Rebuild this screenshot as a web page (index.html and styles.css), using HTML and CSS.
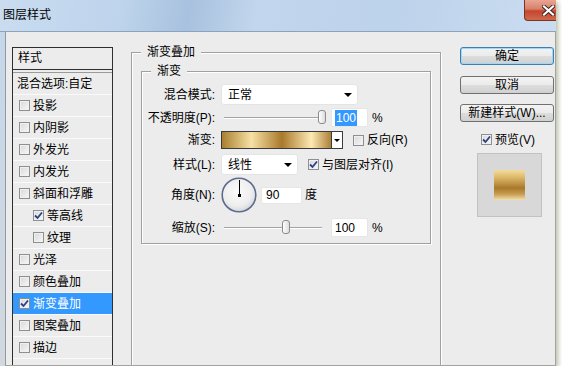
FILE: index.html
```html
<!DOCTYPE html>
<html lang="zh-CN">
<head>
    <meta charset="UTF-8">
    <meta name="viewport" content="width=device-width, initial-scale=1.0">
    <title>图层样式</title>
    <link rel="stylesheet" href="styles.css">
</head>
<body>
    <div class="window">
        <div class="titlebar">
            <span class="title">图层样式</span>
            <span class="close">
                <svg width="13" height="11" viewBox="0 0 13 11">
                    <path d="M2 1.5 L11 9.5 M11 1.5 L2 9.5" stroke="#3a2520" stroke-width="4" stroke-linecap="square"/>
                    <path d="M2 1.5 L11 9.5 M11 1.5 L2 9.5" stroke="#fff" stroke-width="2.2" stroke-linecap="square"/>
                </svg>
            </span>
        </div>
        <div class="frame">
            <div class="client">
                <!-- left: style list -->
                <div class="style-list">
                    <div class="list-head">样式</div>
                    <div class="list-item blend">混合选项:自定</div>
                    <div class="list-item"><span class="cb"></span>投影</div>
                    <div class="list-item"><span class="cb"></span>内阴影</div>
                    <div class="list-item"><span class="cb"></span>外发光</div>
                    <div class="list-item"><span class="cb"></span>内发光</div>
                    <div class="list-item"><span class="cb"></span>斜面和浮雕</div>
                    <div class="list-item sub"><span class="cb"><svg width="9" height="9" viewBox="0 0 9 9"><path d="M1 4.5 L3.5 7 L8 1.5" fill="none" stroke="#2c3f86" stroke-width="1.8"/></svg></span>等高线</div>
                    <div class="list-item sub"><span class="cb"></span>纹理</div>
                    <div class="list-item"><span class="cb"></span>光泽</div>
                    <div class="list-item"><span class="cb"></span>颜色叠加</div>
                    <div class="list-item selected"><span class="cb"><svg width="9" height="9" viewBox="0 0 9 9"><path d="M1 4.5 L3.5 7 L8 1.5" fill="none" stroke="#2c3f86" stroke-width="1.8"/></svg></span>渐变叠加</div>
                    <div class="list-item"><span class="cb"></span>图案叠加</div>
                    <div class="list-item"><span class="cb"></span>描边</div>
                    <div class="list-item"></div>
                </div>

                <!-- middle: settings -->
                <fieldset class="panel">
                    <legend>渐变叠加</legend>
                    <fieldset class="group">
                        <legend>渐变</legend>

                        <div class="row r-mode">
                            <span class="label">混合模式:</span>
                            <span class="select mode">正常<i class="arrow"></i></span>
                        </div>

                        <div class="row r-opacity">
                            <span class="label">不透明度(P):</span>
                            <span class="slider"><i class="thumb" style="left: 97px"></i></span>
                            <span class="num"><span class="sel-text">100</span></span>
                            <span class="unit">%</span>
                        </div>

                        <div class="row r-gradient">
                            <span class="label">渐变:</span>
                            <span class="gradient-pick"><span class="swatch"></span><span class="drop"><i class="arrow small"></i></span></span>
                            <span class="check reverse"><span class="cb"></span>反向(R)</span>
                        </div>

                        <div class="row r-style">
                            <span class="label">样式(L):</span>
                            <span class="select kind">线性<i class="arrow"></i></span>
                            <span class="check align"><span class="cb"><svg width="9" height="9" viewBox="0 0 9 9"><path d="M1 4.5 L3.5 7 L8 1.5" fill="none" stroke="#2c3f86" stroke-width="1.8"/></svg></span>与图层对齐(I)</span>
                        </div>

                        <div class="row r-angle">
                            <span class="label">角度(N):</span>
                            <svg class="dial" width="36" height="36" viewBox="0 0 36 36">
                                <defs>
                                    <radialGradient id="dialFill" cx="0.45" cy="0.4" r="0.6">
                                        <stop offset="0" stop-color="#fbfbfb"/>
                                        <stop offset="0.7" stop-color="#eeeeee"/>
                                        <stop offset="1" stop-color="#d6d8dc"/>
                                    </radialGradient>
                                </defs>
                                <circle cx="18" cy="18" r="16.8" fill="url(#dialFill)" stroke="#5f6b8c" stroke-width="1.6"/>
                                <line x1="18.5" y1="3" x2="18.5" y2="18" stroke="#000" stroke-width="1"/>
                                <rect x="17" y="17" width="3" height="3" fill="#000"/>
                            </svg>
                            <span class="num angle">90</span>
                            <span class="unit deg">度</span>
                        </div>

                        <div class="row r-scale">
                            <span class="label">缩放(S):</span>
                            <span class="slider"><i class="thumb" style="left: 61px"></i></span>
                            <span class="num">100</span>
                            <span class="unit">%</span>
                        </div>
                    </fieldset>
                </fieldset>

                <!-- right: buttons and preview -->
                <div class="actions">
                    <div class="btn default">确定</div>
                    <div class="btn">取消</div>
                    <div class="btn">新建样式(W)...</div>
                    <div class="check preview-check"><span class="cb"><svg width="9" height="9" viewBox="0 0 9 9"><path d="M1 4.5 L3.5 7 L8 1.5" fill="none" stroke="#2c3f86" stroke-width="1.8"/></svg></span>预览(V)</div>
                    <div class="preview">
                        <div class="preview-swatch"></div>
                    </div>
                </div>
            </div>
        </div>
    </div>
</body>
</html>
```

FILE: styles.css
```css
body {
    margin: 0;
    background: #fff;
    font-family: "Liberation Sans", "Noto Sans CJK SC", sans-serif;
    font-size: 12px;
    line-height: 16px;
    color: #000;
}
.window {
    width: 556px;
    height: 366px;
    box-shadow: 2px 2px 5px rgba(130, 140, 100, 0.6);
}

/* title bar */
.titlebar {
    height: 31px;
    display: flex;
    align-items: flex-start;
    border-bottom: 1px solid #8ea3ba;
    background: linear-gradient(100deg, #c9dcf0 0%, #bed4ec 22%, #a8c1de 34%, #c2d6ed 46%, #bdd3eb 70%, #cadcf0 100%);
}
.title {
    padding: 7px 0 0 3px;
}
.close {
    margin-left: auto;
    width: 30px;
    height: 20px;
    display: flex;
    align-items: center;
    justify-content: flex-end;
    padding-right: 1px;
    border: 1px solid #7b3326;
    border-top: 0;
    border-right: 0;
    border-radius: 0 0 0 4px;
    background: linear-gradient(#e8a593 0%, #d7806a 45%, #c4452c 55%, #cf6a4c 100%);
}

.frame {
    display: flex;
    height: 334px;
    background: linear-gradient(#c6d7ea, #d2d8dd);
}
.client {
    flex: 1;
    display: flex;
    align-items: flex-start;
    overflow: hidden;
    margin-left: 5px;
    border-left: 1px solid #8e9aa6;
    border-right: 1px solid #a3a49f;
    border-bottom: 1px solid #a3a49f;
    background: #ececec;
}

/* style list */
.style-list {
    flex: none;
    width: 99px;
    height: 330px;
    margin: 15px 0 0 6px;
    border: 1px solid #2f2f2f;
    border-bottom: 0;
}
.list-head {
    height: 21px;
    line-height: 21px;
    padding-left: 5px;
    border-bottom: 1px solid #2f2f2f;
}
.list-item {
    display: flex;
    align-items: center;
    height: 21px;
    padding-left: 6px;
    border-bottom: 1px solid #fafafa;
    white-space: nowrap;
}
.list-item.blend {
    margin-top: 2px;
    padding-left: 4px;
    border-top: 1px solid #9a9a9a;
}
.list-item.sub {
    padding-left: 20px;
}
.list-item.selected {
    background: #3399ff;
    color: #fff;
}
.list-item .cb {
    margin-right: 3px;
}

/* checkbox */
.cb {
    flex: none;
    box-sizing: border-box;
    width: 11px;
    height: 11px;
    display: inline-flex;
    align-items: center;
    justify-content: center;
    border: 1px solid #8e8f8f;
    background: linear-gradient(135deg, #d8d8d8, #f8f8f8);
    box-shadow: inset 0 0 0 1px #f0f0f0;
}
.check {
    display: flex;
    align-items: center;
    white-space: nowrap;
}
.check .cb {
    margin-right: 3px;
}

/* fieldsets */
fieldset {
    box-sizing: border-box;
    min-width: 0;
    margin: 0;
    border: 1px solid #a0a0a0;
    box-shadow: inset 1px 1px 0 #fff, 1px 1px 0 #fff;
}
legend {
    padding: 0 6px;
    line-height: 16px;
    background: #ececec;
}
.panel {
    flex: none;
    width: 310px;
    height: 345px;
    margin: 12px 0 0 18px;
    padding: 3px 9px 0;
}
.group {
    width: 290px;
    padding: 5px 4px 6px;
}
.group legend {
    margin-left: 5px;
}

/* form rows */
.row {
    display: flex;
    align-items: center;
    white-space: nowrap;
}
.label {
    flex: none;
    width: 69px;
    margin-right: 6px;
    text-align: right;
}
.r-mode { height: 21px; }
.r-opacity { height: 19px; margin-top: 3px; }
.r-gradient { height: 18px; margin-top: 4px; }
.r-style { height: 21px; margin-top: 5px; }
.r-angle { height: 36px; margin-top: 2px; }
.r-scale { height: 19px; margin-top: 5px; }

.select {
    position: relative;
    box-sizing: border-box;
    height: 21px;
    display: flex;
    align-items: center;
    padding-left: 6px;
    background: #fff;
    border: 1px solid #e4e4e4;
    border-radius: 3px;
}
.select.mode { width: 137px; }
.select.kind { width: 77px; }
.arrow {
    margin-left: auto;
    margin-right: 5px;
    width: 0;
    height: 0;
    border-left: 4px solid transparent;
    border-right: 4px solid transparent;
    border-top: 4px solid #000;
}
.arrow.small {
    margin: 0;
    border-left-width: 3px;
    border-right-width: 3px;
    border-top-width: 3px;
}

.slider {
    position: relative;
    flex: none;
    width: 107px;
    height: 19px;
    margin-right: 3px;
}
.slider::before {
    content: "";
    display: block;
    margin: 9px 6px 0 3px;
    height: 1px;
    border-top: 1px solid #a3a3a3;
    background: #fff;
}
.thumb {
    position: absolute;
    top: 2px;
    box-sizing: border-box;
    width: 8px;
    height: 14px;
    border: 1px solid #8b8b8b;
    border-radius: 3px;
    background: linear-gradient(90deg, #ffffff, #dcdcdc);
}

.num {
    box-sizing: border-box;
    flex: none;
    width: 37px;
    height: 19px;
    display: flex;
    align-items: center;
    padding-left: 3px;
    background: #fff;
    border: 1px solid #e6e6e6;
    border-radius: 2px;
}
.num.angle {
    width: 41px;
    height: 17px;
    margin-left: 4px;
    padding-left: 4px;
}
.sel-text {
    background: #3399ff;
    color: #fff;
    padding: 0 1px;
}
.unit {
    margin-left: 4px;
}
.unit.deg {
    margin-left: 3px;
}

.gradient-pick {
    flex: none;
    box-sizing: border-box;
    width: 122px;
    height: 18px;
    display: flex;
    border: 1px solid #3b3b3b;
}
.swatch {
    flex: 1;
    background: linear-gradient(90deg, #a97f2e 0%, #f7e1a5 27%, #a9792a 55%, #fde9b5 82%, #ad8036 100%);
}
.drop {
    width: 10px;
    display: flex;
    align-items: center;
    justify-content: center;
    border-left: 1px solid #3b3b3b;
    background: #fff;
}
.check.reverse { margin-left: 10px; }
.check.align { margin-left: 10px; }

.dial {
    flex: none;
}

/* right column */
.actions {
    flex: none;
    width: 94px;
    margin: 15px 0 0 19px;
}
.btn {
    box-sizing: border-box;
    height: 18px;
    display: flex;
    align-items: center;
    justify-content: center;
    white-space: nowrap;
    border: 1px solid #707070;
    border-radius: 3px;
    background: linear-gradient(#f3f3f3 0%, #ebebeb 50%, #dddddd 51%, #d0d0d0 100%);
    margin-top: 10px;
}
.btn.default {
    margin-top: 0;
    border-color: #3c7fb1;
    box-shadow: inset 0 0 0 1px #9fd8f6;
}
.btn.default + .btn {
    margin-top: 11px;
}
.preview-check {
    height: 15px;
    margin-top: 10px;
    padding-left: 21px;
}
.preview {
    box-sizing: border-box;
    width: 65px;
    height: 64px;
    margin: 6px 0 0 17px;
    display: flex;
    align-items: center;
    justify-content: center;
    border: 1px solid #c2c2c2;
    background: #d8d8d8;
}
.preview-swatch {
    width: 31px;
    height: 30px;
    background: linear-gradient(#f5dc9c 0%, #dcb86a 25%, #a9792b 60%, #c69b51 80%, #f3dfae 100%);
}
```
